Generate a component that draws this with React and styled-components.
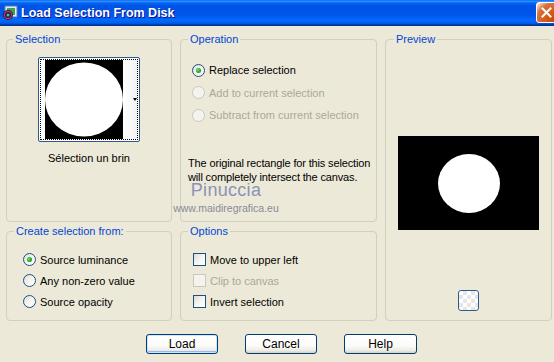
import React from 'react'
import styled, { createGlobalStyle } from 'styled-components'

const GlobalStyle = createGlobalStyle`
  html, body {
    margin: 0;
    padding: 0;
    background: #ece9d8;
  }
  body {
    font-family: "Liberation Sans", Arial, sans-serif;
    font-size: 11px;
    color: #000;
  }
`

const Window = styled.div`
  position: relative;
  width: 554px;
  height: 362px;
  overflow: hidden;
  background: #ece9d8;
`

const TitleBar = styled.div`
  height: 26px;
  display: flex;
  align-items: center;
  padding-left: 2px;
  gap: 3px;
  overflow: hidden;
  background: linear-gradient(
    to bottom,
    #0058ee 0%,
    #3a93ff 4%,
    #288eff 6%,
    #127dff 8%,
    #036ffc 10%,
    #0262ee 14%,
    #0057e5 20%,
    #0054e3 24%,
    #0055eb 56%,
    #005bf5 66%,
    #026afe 76%,
    #0062ef 86%,
    #0052d6 92%,
    #0040ab 94%,
    #003092 100%
  );
`

const Title = styled.span`
  flex: 1;
  color: #fff;
  font-weight: bold;
  font-size: 12.5px;
  text-shadow: 1px 1px #0f1089;
  white-space: nowrap;
`

const CloseButton = styled.div`
  flex: none;
  width: 21px;
  height: 21px;
  margin-right: -3px;
  margin-top: -1px;
  box-sizing: border-box;
  border: 1px solid #fff;
  border-radius: 3px;
  display: flex;
  align-items: center;
  justify-content: center;
  background: radial-gradient(circle at 90% 90%, #cc4600 0, #dc6527 55%, #cd7546 70%, #ffccb2 90%, #fff 100%);
`

const Body = styled.div`
  padding: 7px 0 0 6px;
`

const Grid = styled.div`
  display: grid;
  grid-template-columns: 166px 197px 167px;
  grid-template-rows: 189px 96px;
  column-gap: 8px;
  row-gap: 3px;
`

const Group = styled.fieldset`
  margin: 0;
  padding: 0 0 0 ${p => p.$indent || 0}px;
  min-width: 0;
  box-sizing: border-box;
  border: 1px solid #d0d0bf;
  border-radius: 4px;
  grid-column: ${p => p.$col};
  grid-row: ${p => p.$row};
  display: flex;
  flex-direction: column;
  align-items: ${p => (p.$center ? 'center' : 'stretch')};
`

const Legend = styled.legend`
  color: #0046d5;
  line-height: 13px;
  padding: 0 2px;
  margin-left: ${p => p.$offset || 6}px;
`

const Thumb = styled.div`
  margin-top: 11px;
  width: 102px;
  height: 85px;
  box-sizing: border-box;
  border: 1px solid #2c5a8c;
  border-radius: 2px;
  padding: 1px;
  background: #fff;
`

const Focus = styled.div`
  height: 100%;
  box-sizing: border-box;
  border: 1px dotted #000;
  display: flex;
  padding-left: 4px;
`

const Strip = styled.div`
  flex: 1;
  position: relative;
  background: linear-gradient(to right, #fff, #f2f2f2);
  &::after {
    content: '';
    position: absolute;
    right: 0;
    top: 38px;
    border-left: 2.5px solid transparent;
    border-right: 2.5px solid transparent;
    border-top: 3px solid #000;
  }
`

const Caption = styled.div`
  margin-top: 10px;
  line-height: 13px;
`

const Options = styled.div`
  display: flex;
  flex-direction: column;
  padding-top: ${p => p.$top || 0}px;
`

const Row = styled.label`
  height: ${p => p.$h || 21}px;
  display: flex;
  align-items: center;
  gap: 4px;
  color: ${p => (p.$disabled ? '#aca899' : '#000')};
  white-space: nowrap;
`

const RadioDot = styled.span`
  flex: none;
  width: 13px;
  height: 13px;
  box-sizing: border-box;
  border-radius: 50%;
  border: 1px solid ${p => (p.$disabled ? '#cac8bb' : '#1c5180')};
  background: ${p =>
    p.$disabled
      ? '#f4f3ee'
      : 'linear-gradient(135deg, #dcd9d0 0%, #f4f3ee 45%, #fff 100%)'};
  display: flex;
  align-items: center;
  justify-content: center;
  &::after {
    content: '';
    display: ${p => (p.$checked ? 'block' : 'none')};
    width: 5px;
    height: 5px;
    border-radius: 50%;
    background: radial-gradient(circle at 40% 40%, #6be36b, #21a121 60%, #1a7e1a);
  }
`

const Check = styled.span`
  flex: none;
  width: 13px;
  height: 13px;
  box-sizing: border-box;
  border: 1px solid ${p => (p.$disabled ? '#cac8bb' : '#1c5180')};
  background: ${p =>
    p.$disabled
      ? '#f4f3ee'
      : 'linear-gradient(135deg, #dcd9d0 0%, #f4f3ee 45%, #fff 100%)'};
`

const Note = styled.p`
  margin: 29px 0 0 -4px;
  line-height: 14px;
  letter-spacing: -0.15px;
  white-space: nowrap;
`

const PreviewArt = styled.svg`
  display: block;
  margin-top: 90px;
`

const PreviewButton = styled.div`
  margin-top: 60px;
  width: 21px;
  height: 21px;
  box-sizing: border-box;
  border: 1px solid #2c5a8c;
  border-radius: 3px;
  background-color: #fff;
  background-image: conic-gradient(#e6e6e6 25%, #fff 0 50%, #e6e6e6 0 75%, #fff 0);
  background-size: 8px 8px;
`

const ButtonRow = styled.div`
  display: flex;
  justify-content: center;
  gap: 27px;
  margin-top: 13px;
  padding-left: 3px;
`

const Button = styled.button`
  width: ${p => p.$w || 72}px;
  height: 20px;
  padding: 0;
  box-sizing: border-box;
  font-family: "Liberation Sans", Arial, sans-serif;
  font-size: 12px;
  color: #000;
  border: 1px solid #003c74;
  border-radius: 3px;
  background: linear-gradient(to bottom, #fff 0%, #fbfbf9 60%, #ecebe6 86%, #d6d0c5 100%);
  box-shadow: ${p => (p.$default ? 'inset 0 0 0 1px #cee7ff, inset 0 -1px 0 1px #98b8ea' : 'none')};
`

const Watermark = styled.div`
  position: absolute;
  left: 172px;
  top: 182px;
  display: flex;
  flex-direction: column;
  align-items: center;
  width: 108px;
  pointer-events: none;
`

const WmName = styled.span`
  font-size: 18px;
  line-height: 17px;
  color: #8c92b6;
  letter-spacing: 0.3px;
`

const WmSite = styled.span`
  margin-top: 3px;
  font-size: 10.5px;
  line-height: 12px;
  color: #8a8a98;
`

const AppIcon = () => (
  <svg width="16" height="16" viewBox="0 0 16 16">
    <rect x="3" y="1" width="12" height="11" fill="#dfe9f7" stroke="#5b7fb8" />
    <rect x="5" y="3" width="8" height="7" fill="#3ba34a" />
    <circle cx="6" cy="10" r="5" fill="#222" />
    <circle cx="6" cy="10" r="3.6" fill="none" stroke="#c2318d" strokeWidth="1.2" />
    <circle cx="6" cy="10" r="1.5" fill="#46b3e6" />
  </svg>
)

const CloseX = () => (
  <svg width="11" height="11" viewBox="0 0 11 11">
    <path d="M1.5 1.5 L9.5 9.5 M9.5 1.5 L1.5 9.5" stroke="#fff" strokeWidth="2" strokeLinecap="square" />
  </svg>
)

const Radio = ({ label, checked, disabled }) => (
  <Row $disabled={disabled} $h={22.5}>
    <RadioDot $checked={checked} $disabled={disabled} />
    {label}
  </Row>
)

export default function App() {
  return (
    <Window>
      <GlobalStyle />
      <TitleBar>
        <AppIcon />
        <Title>Load Selection From Disk</Title>
        <CloseButton>
          <CloseX />
        </CloseButton>
      </TitleBar>

      <Body>
        <Grid>
          <Group $col="1" $row="1" $center>
            <Legend $offset={6}>Selection</Legend>
            <Thumb>
              <Focus>
                <svg width="78" height="79" viewBox="0 0 78 79">
                  <rect width="78" height="79" fill="#000" />
                  <ellipse cx="39" cy="39.5" rx="39" ry="37" fill="#fff" />
                </svg>
                <Strip />
              </Focus>
            </Thumb>
            <Caption>Sélection un brin</Caption>
          </Group>

          <Group $col="2" $row="1" $indent={11}>
            <Legend $offset={-4}>Operation</Legend>
            <Options $top={13}>
              <Radio label="Replace selection" checked />
              <Radio label="Add to current selection" disabled />
              <Radio label="Subtract from current selection" disabled />
            </Options>
            <Note>
              The original rectangle for this selection
              <br />
              will completely intersect the canvas.
            </Note>
          </Group>

          <Group $col="3" $row="1 / span 2" $center>
            <Legend $offset={8}>Preview</Legend>
            <PreviewArt width="141" height="94" viewBox="0 0 141 94">
              <rect width="141" height="94" fill="#000" />
              <ellipse cx="71" cy="47.5" rx="31" ry="29.5" fill="#fff" />
            </PreviewArt>
            <PreviewButton />
          </Group>

          <Group $col="1" $row="2" $indent={16}>
            <Legend $offset={-9}>Create selection from:</Legend>
            <Options $top={11}>
              <Row>
                <RadioDot $checked />
                Source luminance
              </Row>
              <Row>
                <RadioDot />
                Any non-zero value
              </Row>
              <Row>
                <RadioDot />
                Source opacity
              </Row>
            </Options>
          </Group>

          <Group $col="2" $row="2" $indent={12}>
            <Legend $offset={-5}>Options</Legend>
            <Options $top={11}>
              <Row>
                <Check />
                Move to upper left
              </Row>
              <Row $disabled>
                <Check $disabled />
                Clip to canvas
              </Row>
              <Row>
                <Check />
                Invert selection
              </Row>
            </Options>
          </Group>
        </Grid>

        <ButtonRow>
          <Button $default>Load</Button>
          <Button>Cancel</Button>
          <Button $w={73}>Help</Button>
        </ButtonRow>
      </Body>

      <Watermark>
        <WmName>Pinuccia</WmName>
        <WmSite>www.maidiregrafica.eu</WmSite>
      </Watermark>
    </Window>
  )
}
